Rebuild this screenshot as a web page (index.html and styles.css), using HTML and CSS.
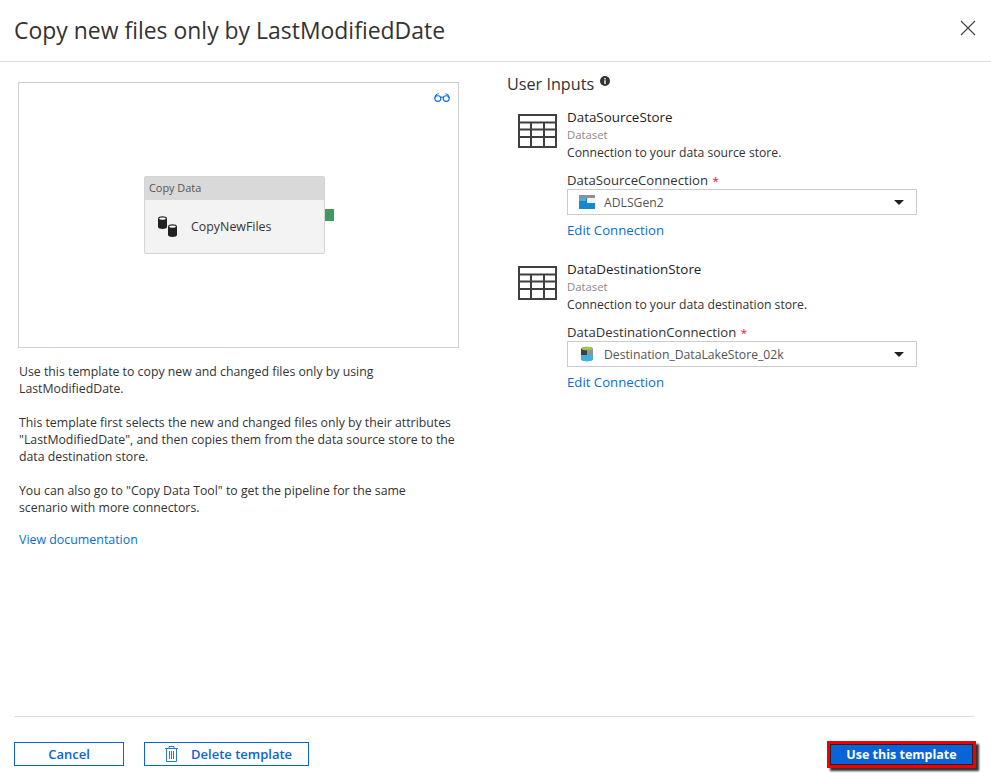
FILE: index.html
```html
<!DOCTYPE html>
<html lang="en">
  <head>
    <meta charset="utf-8" />
    <title>Copy new files only by LastModifiedDate</title>
    <link rel="stylesheet" href="styles.css">
  </head>
  <body>
    <header class="header">
      <h1 class="title">Copy new files only by LastModifiedDate</h1>
      <svg class="close" width="16" height="16" viewBox="0 0 16 16"><path d="M1 1l14 14M15 1L1 15" stroke="#444" stroke-width="1.2" fill="none"/></svg>
    </header>

    <main class="main">
      <section class="left">
        <div class="preview">
          <svg class="glasses" width="16" height="9" viewBox="0 0 16 9"><g fill="none" stroke="#0b6fe0" stroke-width="1.1"><ellipse cx="3.800" cy="5.600" rx="3" ry="2.800"/><ellipse cx="12.200" cy="5.600" rx="3" ry="2.800"/><path d="M6.500 4.600c1-.8 2-.8 3 0M.8 5C1.300 2.500 2.600 1 4.600.8M15.200 5C14.700 2.500 13.400 1 11.400.8"/></g></svg>
          <div class="node">
            <div class="node-head">Copy Data</div>
            <div class="node-body">
              <svg width="21" height="21" viewBox="0 0 21 21"><path d="M1 2.500c0-3 9-3 9 0V11c0 2.500-9 2.500-9 0z" fill="#222"/><ellipse cx="5.500" cy="2.600" rx="3.300" ry="1.200" fill="#fff"/><path d="M11 10.500c0-3 9-3 9 0V19c0 2.500-9 2.500-9 0z" fill="#222"/><ellipse cx="15.500" cy="10.600" rx="3.300" ry="1.200" fill="#fff"/></svg>
              <span class="node-name">CopyNewFiles</span>
            </div>
            <div class="node-port"></div>
          </div>
        </div>
        <div class="desc">
          <p>Use this template to copy new and changed files only by using LastModifiedDate.</p>
          <p>This template first selects the new and changed files only by their attributes "LastModifiedDate", and then copies them from the data source store to the data destination store.</p>
          <p class="desc-last">You can also go to "Copy Data Tool" to get the pipeline for the same scenario with more connectors.</p>
          <a class="link docs" href="#">View documentation</a>
        </div>
      </section>

      <section class="right">
        <h2 class="inputs-title">User Inputs
          <svg width="10" height="10" viewBox="0 0 10 10"><circle cx="5" cy="5" r="5" fill="#333"/><path d="M4.300 4.300h1.400v3.700H4.300zM4.300 2h1.400v1.400H4.300z" fill="#fff"/></svg>
        </h2>

        <div class="input">
          <svg class="table-icon" width="39" height="34" viewBox="0 0 39 34"><path d="M1 1h37v32H1zM1 8.500h37M1 15.500h37M1 23h37M13 8.500V33M26 8.500V33" fill="none" stroke="#3f3f3f" stroke-width="2"/></svg>
          <div class="input-body">
            <div class="input-name">DataSourceStore</div>
            <div class="input-type">Dataset</div>
            <div class="input-desc">Connection to your data source store.</div>
            <label class="input-label">DataSourceConnection <span class="req">*</span></label>
            <div class="select">
              <svg width="16" height="14" viewBox="0 0 16 14"><path d="M0 0h16v14H0z" fill="#8a9299"/><path d="M0 3h16v11H0z" fill="#1a86d0"/><path d="M8 3h8v5H8z" fill="#eef3f7"/><path d="M0 3h7v3H0z" fill="#4fa8e0"/></svg>
              <span class="select-value">ADLSGen2</span>
              <span class="caret"></span>
            </div>
            <a class="link edit" href="#">Edit Connection</a>
          </div>
        </div>

        <div class="input">
          <svg class="table-icon" width="39" height="34" viewBox="0 0 39 34"><path d="M1 1h37v32H1zM1 8.500h37M1 15.500h37M1 23h37M13 8.500V33M26 8.500V33" fill="none" stroke="#3f3f3f" stroke-width="2"/></svg>
          <div class="input-body">
            <div class="input-name">DataDestinationStore</div>
            <div class="input-type">Dataset</div>
            <div class="input-desc">Connection to your data destination store.</div>
            <label class="input-label">DataDestinationConnection <span class="req">*</span></label>
            <div class="select">
              <svg width="16" height="16" viewBox="0 0 16 16"><path d="M2 3c0-3 12-3 12 0v10c0 3-12 3-12 0z" fill="#8e9498"/><path d="M2 3l6-1v7H2z" fill="#3a4248"/><path d="M2 9h12v4c0 3-12 3-12 0z" fill="#3fb1dc"/><ellipse cx="8" cy="2.500" rx="5.500" ry="1.800" fill="#9fc54a"/></svg>
              <span class="select-value">Destination_DataLakeStore_02k</span>
              <span class="caret"></span>
            </div>
            <a class="link edit" href="#">Edit Connection</a>
          </div>
        </div>
      </section>
    </main>

    <footer class="footer">
      <button class="btn btn-cancel">Cancel</button>
      <button class="btn btn-delete">
        <svg width="13" height="16" viewBox="0 0 13 16"><path d="M0 2.500h13M4 2.500V.5h5v2M1.500 2.500v13h10v-13M4.500 5v8M6.500 5v8M8.500 5v8" fill="none" stroke="#2b78dc" stroke-width="1"/></svg>
        Delete template
      </button>
      <button class="btn-primary">Use this template</button>
    </footer>
  </body>
</html>
```

FILE: styles.css
```css
html {
  height: 100%;
}

body {
  margin: 0;
  height: 780px;
  display: flex;
  flex-direction: column;
  background: #fff;
  color: #333;
  font-family: "Open Sans", "Noto Sans", sans-serif;
  font-size: 12px;
  overflow: hidden;
}

.header {
  flex: none;
  display: flex;
  align-items: center;
  justify-content: space-between;
  padding: 0 15px 1px 14px;
  box-sizing: border-box;
  border-bottom: 1px solid #ddd;
  height: 62px;
}

.title {
  margin: 0;
  font-size: 22.950px;
  font-weight: 400;
  color: #333;
}

.close {
  margin-top: -4px;
}

.main {
  flex: 1;
  display: flex;
  min-height: 0;
}

.left {
  width: 441px;
  margin: 20px 0 0 18px;
}

.preview {
  position: relative;
  height: 264px;
  border: 1px solid #d0d0d0;
}

.glasses {
  position: absolute;
  top: 10px;
  right: 8px;
}

.node {
  position: absolute;
  left: 125px;
  top: 93px;
  width: 181px;
  height: 78px;
  box-sizing: border-box;
  border: 1px solid #d4d4d4;
  border-radius: 2px;
  background: #f3f3f3;
}

.node-head {
  height: 23px;
  line-height: 21px;
  padding-left: 4px;
  background: #d9d9d9;
  color: #555;
  font-size: 10.900px;
}

.node-body {
  display: flex;
  align-items: center;
  height: 53px;
  padding-left: 12px;
  gap: 13px;
}

.node-name {
  font-size: 12.400px;
  color: #333;
}

.node-port {
  position: absolute;
  right: -10px;
  top: 32px;
  width: 9px;
  height: 12px;
  background: #3f9960;
}

.desc {
  margin: 15px 0 0 1px;
  width: 438px;
  line-height: 17px;
  font-size: 12.300px;
  color: #333;
}

.desc p {
  margin: 0 0 17px;
}

.desc .desc-last {
  margin-bottom: 15px;
}

.docs {
  font-size: 12.400px;
}

.link {
  color: #0a6ed1;
  text-decoration: none;
}

.right {
  margin: 12px 0 0 48px;
  width: 420px;
}

.inputs-title {
  margin: 0 0 13px;
  font-size: 16.200px;
  font-weight: 400;
  line-height: 21px;
  color: #333;
}

.inputs-title svg {
  vertical-align: 4px;
  margin-left: 2px;
}

.input {
  display: flex;
  gap: 10px;
  margin: 0 0 21px 11px;
}

.table-icon {
  margin-top: 6px;
  flex: none;
}

.input-body {
  width: 350px;
}

.input-name {
  line-height: 18px;
  font-size: 13.400px;
  color: #222;
}

.input-type {
  line-height: 18px;
  font-size: 11.300px;
  color: #8a8a8a;
}

.input-desc {
  line-height: 17px;
  font-size: 12.200px;
}

.input-label {
  display: block;
  margin-top: 10px;
  line-height: 18px;
  font-size: 13.150px;
}

.req {
  color: #e0103a;
  font-size: 11.500px;
  line-height: 1;
  margin-left: 1px;
}

.select {
  display: flex;
  align-items: center;
  height: 26px;
  box-sizing: border-box;
  padding: 0 12px 0 11px;
  gap: 9px;
  border: 1px solid #ccc;
  font-size: 12.200px;
  color: #555;
}

.select-value {
  flex: 1;
}

.caret {
  width: 0;
  height: 0;
  border-left: 5px solid transparent;
  border-right: 5px solid transparent;
  border-top: 5px solid #222;
}

.edit {
  display: block;
  margin-top: 6px;
  line-height: 18px;
  font-size: 13.200px;
}

.footer {
  flex: none;
  height: 64px;
  margin: 0 17px 0 14px;
  box-sizing: border-box;
  border-top: 1px solid #ddd;
  display: flex;
  align-items: flex-start;
  padding-top: 25px;
  gap: 20px;
}

.btn {
  height: 24px;
  box-sizing: border-box;
  border: 1px solid #0b63d8;
  background: #fff;
  color: #0b63d8;
  font-family: inherit;
  font-size: 13px;
  font-weight: 600;
  padding: 0;
  display: flex;
  align-items: center;
  justify-content: center;
}

.btn-cancel {
  width: 110px;
}

.btn-delete {
  width: 165px;
  gap: 13px;
  justify-content: flex-start;
  padding-left: 20px;
}

.btn-primary {
  margin-left: auto;
  margin-right: -2px;
  height: 27px;
  width: 149px;
  margin-top: -1px;
  box-sizing: border-box;
  border: 3px solid #f00000;
  outline: 1px solid #222;
  outline-offset: -4px;
  background: #0b63d8;
  color: #fff;
  font-family: inherit;
  font-size: 12.500px;
  font-weight: 700;
  box-shadow: 3px 3px 2px #333;
  padding: 0;
}
```
